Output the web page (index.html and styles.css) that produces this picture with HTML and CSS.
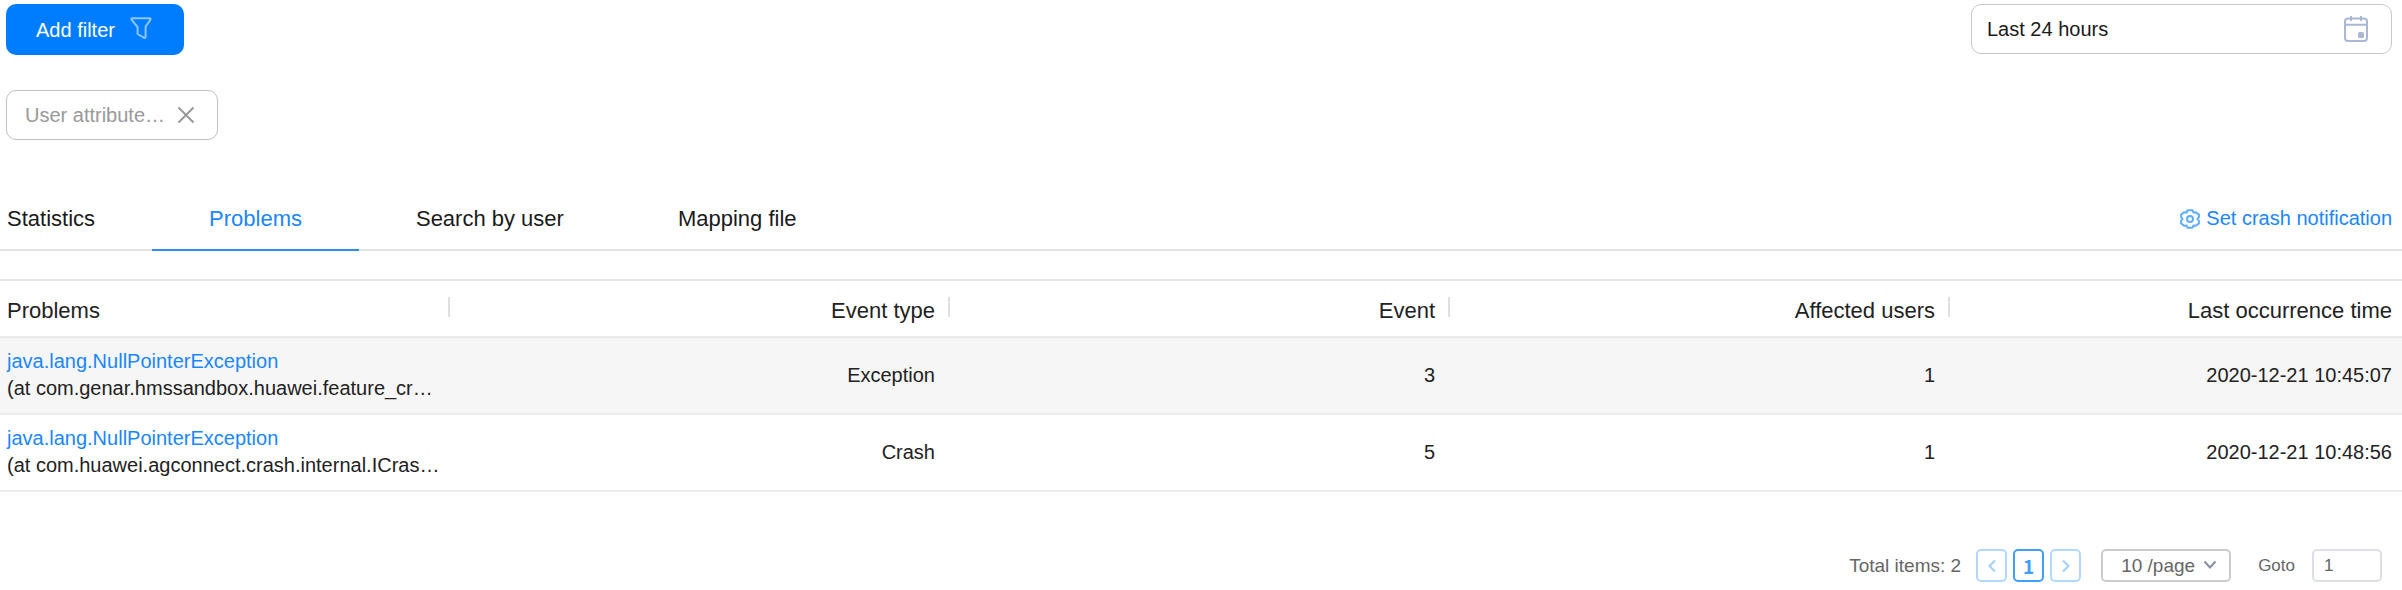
FILE: index.html
```html
<!DOCTYPE html>
<html lang="en">
<head>
<meta charset="utf-8">
<title>Crash problems</title>
<link rel="stylesheet" href="styles.css">
</head>
<body>
<main class="page">
  <div class="toolbar">
    <button class="add-filter" type="button">Add filter
      <svg class="icon-filter" viewBox="0 0 22 22" width="22" height="22" aria-hidden="true"><path d="M2.6 1.2H19.4Q21 1.2 20.4 2.8L15.6 9.6V19.6Q15.6 21.4 13.8 20.7L7.6 17V10.2L1.8 3Q1 1.2 2.6 1.2Z"/></svg>
    </button>
    <label class="date-field">
      <input type="text" value="Last 24 hours" aria-label="Time range" readonly>
      <svg class="icon-calendar" viewBox="0 0 26 28" width="26" height="28" aria-hidden="true"><rect x="2" y="3.5" width="22" height="22.5" rx="3"/><path d="M2 9.7H24M8 1V6M18 1V6"/><rect class="day" x="15" y="17" width="6" height="6" rx="1.5"/></svg>
    </label>
  </div>

  <div class="filters">
    <div class="tag">
      <span>User attribute…</span>
      <button type="button" aria-label="Remove filter"><svg viewBox="0 0 18 18" width="18" height="18" aria-hidden="true"><path d="M1.5 1.5L16.5 16.5M16.5 1.5L1.5 16.5"/></svg></button>
    </div>
  </div>

  <nav class="tabs">
    <a class="tab" href="#statistics">Statistics</a>
    <a class="tab active" href="#problems">Problems</a>
    <a class="tab" href="#search">Search by user</a>
    <a class="tab" href="#mapping">Mapping file</a>
    <a class="notify" href="#notification">
      <svg viewBox="0 0 20 20" width="20" height="20" aria-hidden="true"><path d="M7.6 1.2H12.4L13.4 3.5L15.8 3.3L18.9 5.6V8.2L17.5 10L18.9 11.8V14.4L15.8 16.7L13.4 16.5L12.4 18.8H7.6L6.6 16.5L4.2 16.7L1.1 14.4V11.8L2.5 10L1.1 8.2V5.6L4.2 3.3L6.6 3.5Z"/><circle cx="10" cy="10" r="3"/></svg>
      Set crash notification
    </a>
  </nav>

  <table class="problems">
    <colgroup><col class="col-first"><col class="col-mid"><col class="col-mid"><col class="col-mid"><col></colgroup>
    <thead>
      <tr><th><span>Problems</span></th><th><span>Event type</span></th><th><span>Event</span></th><th><span>Affected users</span></th><th><span>Last occurrence time</span></th></tr>
    </thead>
    <tbody>
      <tr><td><a href="#p1">java.lang.NullPointerException</a><div>(at com.genar.hmssandbox.huawei.feature_cr…</div></td><td>Exception</td><td>3</td><td>1</td><td>2020-12-21 10:45:07</td></tr>
      <tr><td><a href="#p2">java.lang.NullPointerException</a><div>(at com.huawei.agconnect.crash.internal.ICras…</div></td><td>Crash</td><td>5</td><td>1</td><td>2020-12-21 10:48:56</td></tr>
    </tbody>
  </table>

  <div class="pagination">
    <span class="total">Total items: 2</span>
    <div class="pages">
      <button type="button" aria-label="Previous page"><svg viewBox="0 0 8 14" width="8" height="14" aria-hidden="true"><path d="M7 1.5L1.5 7L7 12.5"/></svg></button>
      <button type="button" class="current">1</button>
      <button type="button" aria-label="Next page"><svg viewBox="0 0 8 14" width="8" height="14" aria-hidden="true"><path d="M1 1.5L6.5 7L1 12.5"/></svg></button>
    </div>
    <div class="page-size">
      <select aria-label="Page size"><option>10 /page</option></select>
      <svg viewBox="0 0 14 10" width="14" height="10" aria-hidden="true"><path d="M1.5 1.5L7 7.5L12.5 1.5"/></svg>
    </div>
    <label class="goto" for="goto">Goto</label>
    <input class="goto-input" id="goto" type="text" value="1">
  </div>
</main>
</body>
</html>
```

FILE: styles.css
```css
* { box-sizing: border-box; }

body {
  margin: 0;
  background: #fff;
  color: #222;
  font: 20px/26px "Liberation Sans", Arial, sans-serif;
}

button, input, select { font: inherit; margin: 0; }
a { text-decoration: none; }
svg { display: block; flex: none; fill: none; }

.page { padding-top: 4px; }

.toolbar {
  display: flex;
  justify-content: space-between;
  align-items: flex-start;
  padding: 0 10px 0 6px;
}

.add-filter {
  display: flex;
  align-items: center;
  gap: 15px;
  height: 51px;
  padding: 0 32px 0 30px;
  border: 0;
  border-radius: 10px;
  background: #007dff;
  color: #fff;
}
.icon-filter { stroke: #8cc5ff; stroke-width: 2; margin-bottom: 4px; }

.date-field {
  display: flex;
  align-items: center;
  width: 421px;
  height: 50px;
  padding: 0 22px 0 15px;
  border: 1px solid #c6caca;
  border-radius: 10px;
}
.date-field input {
  flex: 1;
  min-width: 0;
  padding: 0;
  border: 0;
  outline: 0;
  background: none;
  color: #1a1a1a;
}
.icon-calendar { stroke: #a9b8d3; stroke-width: 2; }
.icon-calendar .day { fill: #a9b8d3; stroke: none; }

.filters { display: flex; padding: 35px 6px 0; }
.tag {
  display: flex;
  align-items: center;
  gap: 12px;
  height: 50px;
  padding: 0 22px 0 18px;
  border: 1px solid #c0c0c0;
  border-radius: 10px;
  color: #999;
}
.tag button { padding: 0; border: 0; background: none; }
.tag svg { stroke: #999; stroke-width: 2; }

.tabs {
  display: flex;
  margin-top: 48px;
  padding: 0 10px 0 7px;
  box-shadow: inset 0 -2px #e3e3e3;
}
.tab {
  height: 63px;
  padding: 17px 57px 0;
  color: #1a1a1a;
  font-size: 22px;
  line-height: 28px;
}
.tab:first-child { padding-left: 0; }
.tab.active { color: #1a86ff; border-bottom: 2px solid #2f8cf5; }
.notify {
  display: flex;
  align-items: flex-start;
  gap: 6px;
  margin-left: auto;
  padding-top: 17px;
  color: #1a86ff;
}
.notify svg { margin-top: 4px; stroke: #60adff; stroke-width: 2; }

.problems {
  width: 100%;
  margin-top: 28px;
  border-collapse: separate;
  border-spacing: 0;
  table-layout: fixed;
  border-top: 2px solid #e6e6e6;
}
.col-first { width: 450px; }
.col-mid { width: 500px; }
.problems th {
  height: 57px;
  padding: 0 15px 0 0;
  border-bottom: 2px solid #ebebeb;
  background: linear-gradient(#dde0e0, #dde0e0) right 16px / 2px 20px no-repeat;
  font-size: 22px;
  font-weight: 400;
  line-height: 28px;
  text-align: right;
}
.problems th span { display: block; padding-top: 4px; }
.problems td {
  height: 77px;
  padding: 0 15px 1px 0;
  border-bottom: 2px solid #ebeded;
  line-height: 27px;
  text-align: right;
}
.problems th:first-child, .problems td:first-child {
  padding-left: 7px;
  text-align: left;
}
.problems th:last-child, .problems td:last-child { padding-right: 10px; }
.problems th:last-child { background: none; }
.problems tbody tr:first-child { background: #f6f6f6; }
.problems td:first-child { padding-right: 0; white-space: nowrap; }
.problems a { display: block; color: #1a86ff; }

.pagination {
  display: flex;
  align-items: center;
  margin-top: 57px;
  padding-right: 20px;
  justify-content: flex-end;
  color: #666;
  font-size: 19px;
}
.pages { display: flex; gap: 6px; margin: 0 20px 0 15px; }
.pages button {
  display: grid;
  place-items: center;
  width: 31px;
  height: 33px;
  padding: 0;
  border: 2px solid #b3d8ff;
  border-radius: 5px;
  background: #fff;
}
.pages svg { stroke: #a0cfff; stroke-width: 2; }
.pages .current {
  border-color: #409eff;
  color: #409eff;
  font-family: "Noto Sans CJK SC", sans-serif;
  font-weight: 700;
  line-height: 26px;
}
.page-size { display: grid; align-items: center; }
.page-size > * { grid-area: 1 / 1; }
.page-size select {
  appearance: none;
  width: 130px;
  height: 33px;
  padding: 0 0 0 18px;
  border: 2px solid #ccc;
  border-radius: 5px;
  background: #fff;
  color: #666;
}
.page-size svg {
  justify-self: end;
  margin: 0 14px 2px 0;
  stroke: #8790a0;
  stroke-width: 2;
  pointer-events: none;
}
.goto { margin: 0 17px 0 27px; font-size: 17px; }
.goto-input {
  width: 70px;
  height: 33px;
  padding: 0 10px;
  border: 2px solid #dcdfe6;
  border-radius: 5px;
  color: #606266;
  font-size: 17px;
}
```
